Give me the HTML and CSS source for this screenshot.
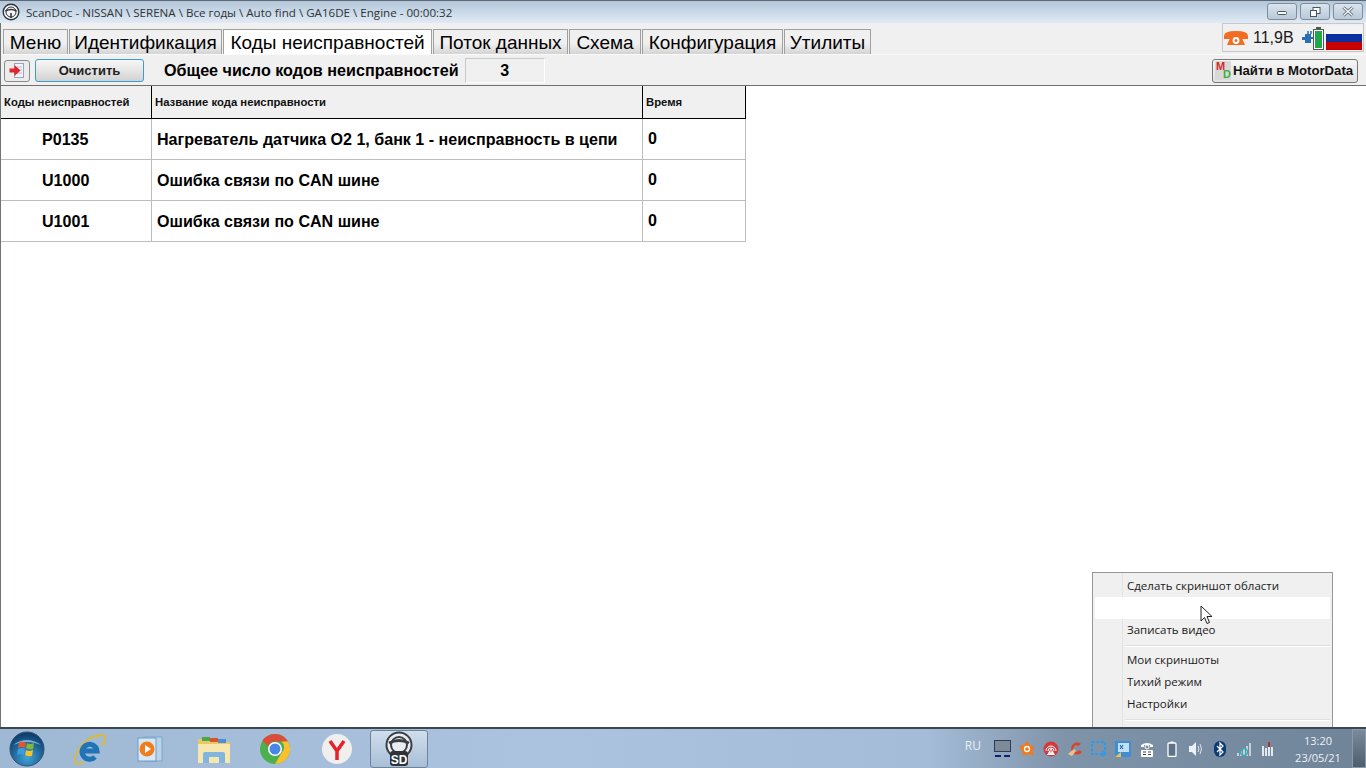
FILE: index.html
```html
<!DOCTYPE html>
<html>
<head>
  <meta charset="utf-8">
  <link rel="stylesheet" href="styles.css">
</head>
<body>
  <div class="window">
    <div class="titlebar">
      <svg class="app-icon" width="18" height="18" viewBox="0 0 18 18"><circle cx="9" cy="9" r="7.800" fill="#f4f6f8" stroke="#2f3338" stroke-width="1.400"/><circle cx="9" cy="9" r="5" fill="none" stroke="#2f3338"/><path d="M3.500 8q5.500-3 11 0M9 10v5" stroke="#2f3338" stroke-width="1.600" fill="none"/></svg>
      <span class="title-text">ScanDoc - NISSAN \ SERENA \ Все годы \ Auto find \ GA16DE \ Engine - 00:00:32</span>
      <div class="win-btns">
        <div class="win-btn"><svg width="12" height="10" viewBox="0 0 12 10"><rect x="1.500" y="4.500" width="9" height="3" rx="1" fill="#fff" stroke="#4a5563"/></svg></div>
        <div class="win-btn"><svg width="12" height="12" viewBox="0 0 12 12"><rect x="4" y="1.500" width="7" height="6" fill="#fff" stroke="#4a5563"/><rect x="1.500" y="4.500" width="6" height="6" fill="#fff" stroke="#4a5563"/></svg></div>
        <div class="win-btn"><svg width="14" height="11" viewBox="0 0 14 11"><path d="M2.500 1.500l9 8M11.500 1.500l-9 8" stroke="#4a5563" stroke-width="3"/><path d="M2.500 1.500l9 8M11.500 1.500l-9 8" stroke="#fff" stroke-width="1.400"/></svg></div>
      </div>
    </div>

    <div class="tabbar">
      <div class="tab tab-menu">Меню</div>
      <div class="tab tab-ident">Идентификация</div>
      <div class="tab tab-codes active">Коды неисправностей</div>
      <div class="tab tab-flow">Поток данных</div>
      <div class="tab tab-scheme">Схема</div>
      <div class="tab tab-config">Конфигурация</div>
      <div class="tab tab-utils">Утилиты</div>
      <div class="status-box">
        <svg width="24" height="16" viewBox="0 0 24 16"><path d="M0 6q0-5 12-5t12 5v3h-7V6H7v3H0z" fill="#f26d21"/><path d="M7 6h10l4 9H3z" fill="#f26d21"/><circle cx="12" cy="10.500" r="3.400" fill="#fff"/><circle cx="12" cy="10.500" r="1.500" fill="#f26d21"/></svg>
        <span class="volt">11,9В</span>
        <svg class="plug" width="11" height="16" viewBox="0 0 11 16"><path d="M0 7h3V4h6v9H3v-3H0z" fill="#2a6fb5"/><path d="M6 1v3M9 1v3" stroke="#2a6fb5" stroke-width="1.500"/><path d="M9 8h2" stroke="#2a6fb5" stroke-width="2"/></svg>
        <div class="battery"><div class="battery-fill"></div></div>
        <div class="flag"><div class="flag-w"></div><div class="flag-b"></div><div class="flag-r"></div></div>
      </div>
    </div>

    <div class="toolbar">
      <div class="icon-btn">
        <svg width="18" height="18" viewBox="0 0 18 18"><rect x="6.500" y="1.500" width="9" height="14" fill="#f4f4f8" stroke="#9aa3c0"/><path d="M9 5h5M9 8h5M9 11h5" stroke="#b5bdd6"/><path d="M1.500 6.500h5V3l6 5.500-6 5.500v-3.500h-5z" fill="#e0252b"/></svg>
      </div>
      <button class="clear-btn">Очистить</button>
      <span class="count-label">Общее число кодов неисправностей</span>
      <div class="count-box">3</div>
      <button class="md-btn">
        <span class="md-logo"><span class="md-m">M</span><span class="md-d">D</span></span>
        <span class="md-text">Найти в MotorData</span>
      </button>
    </div>

    <div class="content">
      <table class="codes">
        <thead>
          <tr><th class="col-code">Коды неисправностей</th><th class="col-name">Название кода неисправности</th><th class="col-time">Время</th></tr>
        </thead>
        <tbody>
          <tr><td class="code">P0135</td><td>Нагреватель датчика О2 1, банк 1 - неисправность в цепи</td><td class="time">0</td></tr>
          <tr><td class="code">U1000</td><td>Ошибка связи по CAN шине</td><td class="time">0</td></tr>
          <tr><td class="code">U1001</td><td>Ошибка связи по CAN шине</td><td class="time">0</td></tr>
        </tbody>
      </table>
    </div>
  </div>

  <div class="taskbar">
    <svg class="orb" width="36" height="36" viewBox="0 0 36 36">
      <defs><radialGradient id="orbg" cx="50%" cy="75%" r="70%"><stop offset="0" stop-color="#3fa3d8"/><stop offset="1" stop-color="#0d3e6e"/></radialGradient></defs>
      <circle cx="18" cy="18" r="17" fill="url(#orbg)" stroke="#31506e"/>
      <path d="M4 14q14-10 28 0q-14-6-28 0z" fill="#a8cfe8" opacity=".7"/>
      <path d="M10 12q4-2 7 0l-1 5q-3-2-7 0z" fill="#e8542a"/>
      <path d="M18 12q3 2 7 0l-1 6q-4 1-7-1z" fill="#7fb83a"/>
      <path d="M9 18q4-2 7 0l-1 6q-3-2-7 0z" fill="#3a9be0"/>
      <path d="M17 19q3 2 7 0l-1 6q-4 1-7-1z" fill="#f2c230"/>
    </svg>
    <div class="pin pin-ie">
      <svg width="32" height="34" viewBox="0 0 32 34"><path d="M26 3Q14 4 6 16T2 31q2 3 8-1" fill="none" stroke="#d9b93f" stroke-width="2"/><path d="M22 5q8-4 9 0 1 3-3 9" fill="none" stroke="#d9b93f" stroke-width="2"/><path d="M8 19h15a7.500 7.500 0 1 0-2 6" fill="none" stroke="#1f73b7" stroke-width="5"/></svg>
    </div>
    <div class="pin pin-wmp">
      <svg width="28" height="28" viewBox="0 0 28 28"><rect x="8" y="2" width="18" height="24" fill="#b9d3ea" stroke="#7fa5c7"/><rect x="2" y="3" width="18" height="23" fill="#d7e7f4" stroke="#6f9cc4"/><circle cx="11" cy="14" r="7.500" fill="#ef7d1a"/><path d="M9 10l6 4-6 4z" fill="#fff"/></svg>
    </div>
    <div class="pin pin-folder">
      <svg width="34" height="30" viewBox="0 0 34 30"><path d="M1 5h12l3 3h17v21H1z" fill="#e9c766"/><path d="M5 3h8v4H5z" fill="#4aa84a"/><path d="M13 4h8v4h-8z" fill="#d9532c"/><path d="M21 5h8v4h-8z" fill="#4a90d9"/><path d="M1 10h32v19H1z" fill="#f6e7ae"/><path d="M6 29v-9q0-2 2-2h18q2 0 2 2v9h-6v-6H12v6z" fill="#7fb5de"/></svg>
    </div>
    <div class="pin pin-chrome">
      <svg width="32" height="32" viewBox="0 0 32 32"><circle cx="16" cy="16" r="15" fill="#4caf50"/><path d="M16 1a15 15 0 0 1 13 7.500H16a7.500 7.500 0 0 0-7 5L3.500 7.500A15 15 0 0 1 16 1z" fill="#dd4b39"/><path d="M29 8.500A15 15 0 0 1 16 31l6.500-11a7.500 7.500 0 0 0 0-11.500z" fill="#fbc02d"/><circle cx="16" cy="16" r="7" fill="#fff"/><circle cx="16" cy="16" r="5.500" fill="#4a86e8"/></svg>
    </div>
    <div class="pin pin-yandex">
      <svg width="32" height="32" viewBox="0 0 32 32"><circle cx="16" cy="16" r="15" fill="#f1efee"/><path d="M9 8l7 10v9M23 8l-7 10" stroke="#e3222a" stroke-width="3.500" fill="none"/></svg>
    </div>
    <div class="pin pin-sd">
      <svg width="30" height="36" viewBox="0 0 30 36"><circle cx="15" cy="14" r="12.500" fill="#e9edf2" stroke="#3a3f45" stroke-width="2"/><circle cx="15" cy="14" r="8" fill="none" stroke="#3a3f45" stroke-width="2"/><path d="M5 12q10-5 20 0" stroke="#3a3f45" stroke-width="3" fill="none"/><rect x="6" y="20" width="18" height="15" rx="3" fill="#2f3338"/><text x="15" y="33" class="sd-text">SD</text></svg>
    </div>

    <div class="tray">
      <span class="lang">RU</span>
      <div class="tray-icons">
        <svg width="17" height="17" viewBox="0 0 17 17"><rect x=".5" y=".5" width="16" height="11" fill="#7d8a98" stroke="#333a55"/><path d="M1 16h6M10 16h6" stroke="#10206a" stroke-width="2"/></svg>
        <svg width="16" height="16" viewBox="0 0 16 16"><path d="M0 5l5-1 3-4 3 4 5 3-3 3 2 5-6-2-5 2-1-5z" fill="#f07a1c"/><circle cx="8" cy="8" r="2.500" fill="none" stroke="#fff" stroke-width="1.300"/></svg>
        <svg width="16" height="16" viewBox="0 0 16 16"><circle cx="8" cy="8" r="7.500" fill="#d23a3f"/><path d="M3 10a5 5 0 0 1 10 0M5 10a3 3 0 0 1 6 0" stroke="#fff" fill="none"/><path d="M8 7l4 7H4z" fill="#fff"/><path d="M8 9v2.500" stroke="#d23a3f"/></svg>
        <svg width="17" height="16" viewBox="0 0 17 16"><path d="M14 3a6 6 0 1 0 1 8l-3-2a3 3 0 1 1-1-4z" fill="#d8432c"/><path d="M1 13l6-5 2 2-4 5z" fill="#e8c48a"/></svg>
        <svg width="16" height="16" viewBox="0 0 16 16"><rect x="1" y="1" width="13" height="12" fill="none" stroke="#2f9be8" stroke-width="2" stroke-dasharray="3 1.500"/><path d="M12 10v5M10 13l2 2 2-2" stroke="#2f9be8" stroke-width="1.500" fill="none"/></svg>
        <svg width="16" height="16" viewBox="0 0 16 16"><rect width="16" height="16" rx="1" fill="#3d8ed6"/><rect x="3" y="2" width="11" height="9" fill="#bfe0f6"/><path d="M0 16l6-5v5z" fill="#e8c84a"/><path d="M5 8l3-4M8 8l-3-4" stroke="#134d86"/></svg>
        <svg width="14" height="16" viewBox="0 0 14 16"><path d="M1 6v-2q6-4 12 0v2h-3V4H4v2z" fill="#fff"/><circle cx="7" cy="6" r="2" fill="none" stroke="#fff"/><rect x="1" y="9" width="12" height="7" rx="1" fill="#fff"/><path d="M3 11h3M8 11h3M3 13.500h3M8 13.500h3" stroke="#444"/></svg>
        <svg width="10" height="16" viewBox="0 0 10 16"><rect x="1" y="2" width="8" height="13.500" rx="1" fill="#5f7388" stroke="#fff" stroke-width="1.300"/><rect x="3.500" y=".5" width="3" height="1.500" fill="#fff"/></svg>
        <svg width="16" height="16" viewBox="0 0 16 16"><path d="M1 5h3l4-4v14l-4-4H1z" fill="#eef2f6"/><path d="M10 5q2 3 0 6M12 3q3 5 0 10" stroke="#dfe6ee" fill="none"/></svg>
        <svg width="12" height="16" viewBox="0 0 12 16"><rect width="12" height="16" rx="6" fill="#0a3a78"/><path d="M3 5l6 6-3 3V2l3 3-6 6" stroke="#fff" stroke-width="1.200" fill="none"/></svg>
        <svg width="16" height="16" viewBox="0 0 16 16"><path d="M1 12h2v3H1zM4 10h2v5H4zM7 8h2v7H7zM10 5h2v10h-2zM13 2h2v13h-2z" fill="#c7d0d9"/><circle cx="8" cy="11" r="3.500" fill="none" stroke="#2ab0b8" stroke-width="1.500"/></svg>
        <svg width="14" height="16" viewBox="0 0 14 16"><path d="M1 5h2v10H1zM4 7h2v8H4zM7 1h2v14H7zM10 6h2v9h-2z" fill="#e4e8ec"/><path d="M7 1h2v5H7z" fill="#a33"/></svg>
      </div>
      <div class="clock"><div>13:20</div><div>23/05/21</div></div>
      <div class="show-desktop"></div>
    </div>
  </div>

  <div class="tray-menu">
    <div class="menu-item">Сделать скриншот области</div>
    <div class="menu-item hover"></div>
    <div class="menu-item">Записать видео</div>
    <div class="menu-sep"></div>
    <div class="menu-item">Мои скриншоты</div>
    <div class="menu-item">Тихий режим</div>
    <div class="menu-item">Настройки</div>
    <div class="menu-sep"></div>
  </div>
  <svg class="cursor" width="14" height="21" viewBox="0 0 14 21"><path d="M1 1v15l3.500-3.500 2.500 6 2.500-1-2.500-6h5z" fill="#fff" stroke="#222"/></svg>
</body>
</html>
```

FILE: styles.css
```css
html, body {
  margin: 0;
  width: 1366px;
  height: 768px;
  overflow: hidden;
}

body {
  position: relative;
  display: flex;
  flex-direction: column;
  font-family: "Liberation Sans", Arial, sans-serif;
  color: #000;
  background: #fff;
}

.window {
  flex: 1;
  display: flex;
  flex-direction: column;
  min-height: 0;
  border-left: 1px solid #6e7478;
}

/* title bar */
.titlebar {
  height: 23px;
  display: flex;
  align-items: center;
  margin-left: -1px;
  background: linear-gradient(180deg, #b4c6d8 0%, #c4d5e6 40%, #e0eaf4 100%);
  border-top: 1px solid #5c6a78;
  box-sizing: border-box;
}

.app-icon {
  margin-left: 2px;
}

.title-text {
  margin-left: 6px;
  font-family: "Open Sans", sans-serif;
  font-size: 11.6px;
  color: #333;
}

.win-btns {
  margin-left: auto;
  margin-right: 3px;
  display: flex;
  align-self: flex-start;
  gap: 3px;
}

.win-btn {
  width: 28px;
  height: 15px;
  margin-top: 2px;
  display: flex;
  align-items: center;
  justify-content: center;
  border: 1px solid #7f8d9b;
  border-radius: 3px;
  background: linear-gradient(180deg, #d9e4ee, #b9c9d8);
}

/* tabs */
.tabbar {
  height: 31px;
  display: flex;
  align-items: flex-end;
  background: #f0f0f0;
  padding-left: 2px;
}

.tab {
  height: 25px;
  padding-top: 2px;
  box-sizing: border-box;
  display: flex;
  align-items: center;
  justify-content: center;
  font-size: 19px;
  margin-right: 1px;
  border: 1px solid #a0a0a0;
  border-bottom: none;
  background: linear-gradient(180deg, #f0f0f0 55%, #d4d4d4 100%);
}

.tab.active {
  background: #fff;
}

.tab-menu { width: 65px; }
.tab-ident { width: 153px; }
.tab-codes { width: 209px; }
.tab-flow { width: 135px; }
.tab-scheme { width: 72px; }
.tab-config { width: 141px; }
.tab-utils { width: 87px; }

.status-box {
  margin-left: auto;
  margin-right: 2px;
  align-self: flex-start;
  width: 142px;
  height: 29px;
  box-sizing: border-box;
  border: 1px solid #c8c8c8;
  display: flex;
  align-items: center;
  padding-left: 1px;
}

.volt {
  margin-left: 5px;
  font-size: 16px;
  color: #1a1a1a;
}

.plug {
  margin-left: 8px;
}

.battery {
  position: relative;
  width: 11px;
  height: 21px;
  margin-top: 3px;
  border: 1px solid #555;
  background: #fff;
  padding: 1px;
  box-sizing: border-box;
}

.battery::before {
  content: "";
  position: absolute;
  left: 2px;
  top: -3px;
  width: 5px;
  height: 2px;
  background: #555;
}

.battery-fill {
  height: 100%;
  background: #1fa84a;
}

.flag {
  width: 36px;
  height: 24px;
  margin-left: 2px;
  display: flex;
  flex-direction: column;
}

.flag-w { height: 8px; background: #f4f4f4; }
.flag-b { height: 8px; background: #0b2f9e; }
.flag-r { height: 8px; background: #c80000; }

/* toolbar */
.toolbar {
  height: 32px;
  display: flex;
  align-items: center;
  background: #f0f0f0;
  padding: 1px 0 0 3px;
  box-sizing: border-box;
  border-top: 1px solid #fbfbfb;
  border-bottom: 1px solid #6f6f6f;
}

.icon-btn {
  width: 24px;
  height: 20px;
  display: flex;
  align-items: center;
  justify-content: center;
  border: 1px solid #8a8a8a;
  border-radius: 3px;
  background: #ececec;
}

.clear-btn {
  width: 109px;
  height: 23px;
  margin-left: 5px;
  padding: 0;
  font-family: "Liberation Sans", Arial, sans-serif;
  font-size: 13px;
  font-weight: bold;
  color: #222;
  border: 1px solid #3f9ad0;
  border-radius: 3px;
  background: linear-gradient(180deg, #f6f6f6 0%, #e6e6e6 50%, #d2d2d2 100%);
}

.count-label {
  margin-left: 20px;
  font-size: 16.15px;
  font-weight: bold;
}

.count-box {
  width: 78px;
  height: 23px;
  margin-left: 6px;
  display: flex;
  align-items: center;
  justify-content: center;
  font-size: 16px;
  font-weight: bold;
  border: 1px solid;
  border-color: #c8c8c8 #fff #fff #c8c8c8;
}

.md-btn {
  margin-left: auto;
  margin-right: 8px;
  width: 146px;
  height: 24px;
  padding: 0 0 0 2px;
  display: flex;
  align-items: center;
  gap: 2px;
  white-space: nowrap;
  font-family: "Liberation Sans", Arial, sans-serif;
  font-size: 13.2px;
  font-weight: bold;
  color: #111;
  border: 1px solid #777;
  border-radius: 3px;
  background: linear-gradient(180deg, #f6f6f6 0%, #e2e2e2 100%);
}

.md-logo {
  width: 16px;
  height: 19px;
  flex-shrink: 0;
  background: #d8d8d8;
  position: relative;
  font-size: 11px;
  line-height: 1;
}

.md-m {
  position: absolute;
  left: 1px;
  top: 0;
  color: #d62a2a;
}

.md-d {
  position: absolute;
  right: 0;
  bottom: 0;
  color: #3fae3f;
}

/* table */
.content {
  flex: 1;
  min-height: 0;
  background: #fff;
}

.codes {
  width: 745px;
  border-collapse: separate;
  border-spacing: 0;
  table-layout: fixed;
}

.codes th,
.codes td {
  box-sizing: border-box;
}

.codes th {
  height: 33px;
  padding: 0 0 0 3px;
  text-align: left;
  font-size: 11.3px;
  font-weight: bold;
  background: #f0f0f0;
  color: #111;
  border-right: 1px solid #000;
  border-bottom: 1px solid #000;
}

.codes td {
  height: 41px;
  padding: 0 0 0 5px;
  font-size: 16.07px;
  font-weight: bold;
  border-right: 1px solid #bdbdbd;
  border-bottom: 1px solid #bdbdbd;
}

.col-code { width: 151px; }
.col-name { width: 491px; }
.col-time { width: 103px; }

.codes td.time {
  padding-bottom: 2px;
}

.codes td.code {
  padding-left: 41px;
}

/* taskbar */
.taskbar {
  height: 41px;
  flex-shrink: 0;
  display: flex;
  align-items: center;
  box-sizing: border-box;
  border-top: 2px solid #3d4750;
  background: linear-gradient(90deg, #9fb8d4 0%, #abc3de 40%, #a4bcd8 68%, #7f93a9 78%, #6f8399 100%);
}

.orb {
  margin-left: 9px;
}

.pin {
  display: flex;
  align-items: center;
  justify-content: center;
  height: 38px;
}

.pin-ie { margin-left: 29px; }
.pin-wmp { margin-left: 30px; }
.pin-folder { margin-left: 33px; }
.pin-chrome { margin-left: 28px; }
.pin-yandex { margin-left: 30px; }

.pin-sd {
  width: 58px;
  margin-left: 17px;
  box-sizing: border-box;
  border: 1px solid #6f8296;
  border-radius: 3px;
  background: linear-gradient(180deg, #d0deec, #a8bfd8);
}

.sd-text {
  font-family: "Liberation Sans", Arial, sans-serif;
  font-size: 12px;
  font-weight: bold;
  fill: #fff;
  text-anchor: middle;
}

.tray {
  margin-left: auto;
  display: flex;
  align-items: center;
  height: 100%;
}

.lang {
  font-family: "Open Sans", sans-serif;
  font-size: 12px;
  color: #e8eef4;
  margin-right: 10px;
  margin-top: -6px;
}

.tray-icons {
  display: grid;
  grid-template-columns: repeat(12, 24.1px);
  justify-items: center;
  align-items: center;
}

.clock {
  margin-left: 7px;
  width: 62px;
  font-family: "Open Sans", sans-serif;
  font-size: 11px;
  line-height: 17px;
  text-align: center;
  color: #eef2f6;
}

.show-desktop {
  width: 14px;
  height: 100%;
  margin-left: 3px;
  box-sizing: border-box;
  border: 1px solid #8a9aac;
  background: linear-gradient(180deg, #7b8a9b, #4f5e6e);
}

/* context menu from the tray */
.tray-menu {
  position: absolute;
  left: 1092px;
  top: 572px;
  width: 241px;
  height: 155px;
  box-sizing: border-box;
  padding: 2px;
  overflow: hidden;
  background: linear-gradient(90deg, #f0f0f0 0, #f0f0f0 29px, #e2e3e3 29px, #e2e3e3 30px, #f0f0f0 30px);
  border: 1px solid #979797;
  border-bottom: none;
  font-family: "Open Sans", sans-serif;
  font-size: 11.5px;
  color: #1a1a1a;
}

.menu-item {
  height: 22px;
  line-height: 22px;
  padding-left: 32px;
}

.menu-item.hover {
  background: #fff;
}

.menu-sep {
  height: 1px;
  margin: 4px 0 3px 30px;
  background: #e0e0e0;
  box-shadow: 0 1px 0 #fff;
}

.cursor {
  position: absolute;
  left: 1200px;
  top: 605px;
}
```
